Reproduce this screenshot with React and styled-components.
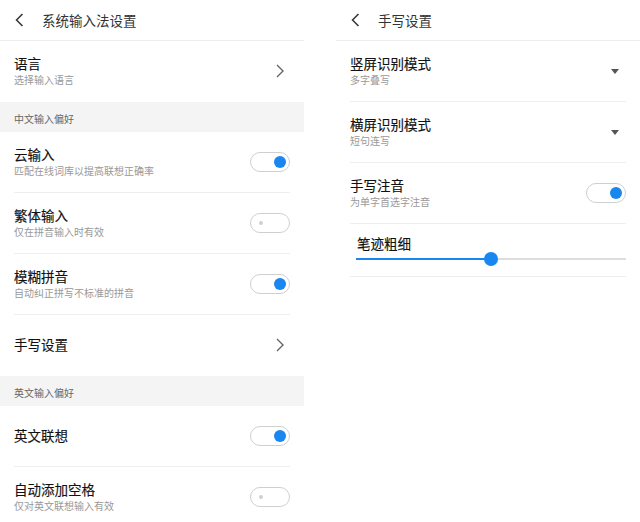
import styled, { createGlobalStyle } from 'styled-components'

const Global = createGlobalStyle`
  html, body { margin: 0; padding: 0; background: #fff; }
  body { font-family: "Noto Sans CJK SC", "Noto Sans", sans-serif; }
`;

const Page = styled.div`
  display: flex;
  gap: 32px;
  width: 640px;
  height: 522px;
  overflow: hidden;
`;

const Panel = styled.div`
  width: 304px;
  display: flex;
  flex-direction: column;
  flex-shrink: 0;
`;

const Header = styled.div`
  height: 40px;
  flex-shrink: 0;
  border-bottom: 1px solid #eeeeee;
  display: flex;
  align-items: center;
  padding-left: 15px;
  gap: 18px;
  color: #333;
  font-size: 13.5px;
`;

const Section = styled.div`
  height: 30px;
  flex-shrink: 0;
  background: #f4f4f4;
  display: flex;
  align-items: center;
  padding-left: 14px;
  padding-top: 2px;
  box-sizing: border-box;
  font-size: 10px;
  color: #666;
`;

const Row = styled.div`
  margin: 0 14px;
  height: 60px;
  flex-shrink: 0;
  border-bottom: 1px solid ${p => (p.$last ? 'transparent' : '#eeeeee')};
  display: flex;
  align-items: center;
  justify-content: space-between;
`;

const Texts = styled.div`
  display: flex;
  flex-direction: column;
  margin-top: -2px;
`;

const Title = styled.div`
  font-size: 13.5px;
  font-weight: 400;
  color: #111;
  line-height: 20px;
  -webkit-text-stroke: 0.15px #111;
`;

const Sub = styled.div`
  font-size: 10px;
  color: #999;
  line-height: 14px;
`;

const Toggle = styled.div`
  width: 40px;
  height: 20px;
  box-sizing: border-box;
  border: 1px solid #cfcfcf;
  border-radius: 10px;
  display: flex;
  align-items: center;
  justify-content: ${p => (p.$on ? 'flex-end' : 'flex-start')};
  padding: 0 3px 0 ${p => (p.$on ? 3 : 8)}px;
`;

const Knob = styled.div`
  width: ${p => (p.$on ? 12 : 4)}px;
  height: ${p => (p.$on ? 12 : 4)}px;
  border-radius: 50%;
  background: ${p => (p.$on ? '#1a86f0' : '#d0d0d0')};
`;

const SliderRow = styled.div`
  margin: 0 14px;
  border-bottom: 1px solid #eeeeee;
  display: flex;
  flex-direction: column;
  padding-top: 9px;
  height: 43px;
`;

const SliderTitle = styled(Title)`
  padding-left: 7px;
`;

const Track = styled.div`
  position: relative;
  margin: 5px 0 0 6px;
  height: 2px;
  background: #dddddd;
`;

const Fill = styled.div`
  height: 2px;
  background: #1a86f0;
`;

const Thumb = styled.div`
  position: absolute;
  top: -6px;
  width: 14px;
  height: 14px;
  margin-left: -7px;
  border-radius: 50%;
  background: #1a86f0;
`;

const Back = () => (
  <svg width="9" height="14" viewBox="0 0 9 14">
    <path d="M7.5 1 L1.5 7 L7.5 13" fill="none" stroke="#333" strokeWidth="1.5" />
  </svg>
);

const Chevron = () => (
  <svg width="8" height="14" viewBox="0 0 8 14" style={{ marginRight: 6 }}>
    <path d="M1 1 L7 7 L1 13" fill="none" stroke="#666" strokeWidth="1.4" />
  </svg>
);

const Caret = () => (
  <svg width="8" height="5" viewBox="0 0 8 5" style={{ marginRight: 7 }}>
    <path d="M0 0 H8 L4 5 Z" fill="#555" />
  </svg>
);

function Item({ title, sub, right, last })
{
  return (
    <Row $last={last}>
      <Texts>
        <Title>{title}</Title>
        {sub && <Sub>{sub}</Sub>}
      </Texts>
      {right}
    </Row>
  );
}

const Switch = ({ on }) => (
  <Toggle $on={on}><Knob $on={on} /></Toggle>
);

export default function App ()
{
  const value = 0.5;
  return (
    <Page>
      <Global />
      <Panel>
        <Header><Back />系统输入法设置</Header>
        <Item title="语言" sub="选择输入语言" right={<Chevron />} last />
        <Section>中文输入偏好</Section>
        <Item title="云输入" sub="匹配在线词库以提高联想正确率" right={<Switch on />} />
        <Item title="繁体输入" sub="仅在拼音输入时有效" right={<Switch />} />
        <Item title="模糊拼音" sub="自动纠正拼写不标准的拼音" right={<Switch on />} />
        <Item title="手写设置" right={<Chevron />} last />
        <Section>英文输入偏好</Section>
        <Item title="英文联想" right={<Switch on />} />
        <Item title="自动添加空格" sub="仅对英文联想输入有效" right={<Switch />} />
      </Panel>
      <Panel>
        <Header><Back />手写设置</Header>
        <Item title="竖屏识别模式" sub="多字叠写" right={<Caret />} />
        <Item title="横屏识别模式" sub="短句连写" right={<Caret />} />
        <Item title="手写注音" sub="为单字首选字注音" right={<Switch on />} />
        <SliderRow>
          <SliderTitle>笔迹粗细</SliderTitle>
          <Track>
            <Fill style={{ width: `${value * 100}%` }} />
            <Thumb style={{ left: `${value * 100}%` }} />
          </Track>
        </SliderRow>
      </Panel>
    </Page>
  );
}
